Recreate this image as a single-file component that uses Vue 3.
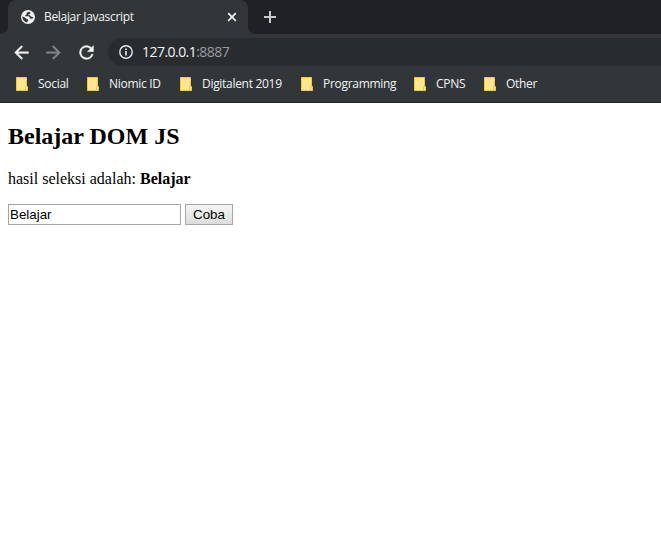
<script setup>
import { ref } from 'vue'

const bookmarks = [
  { name: 'Social', width: 31 },
  { name: 'Niomic ID', width: 53 },
  { name: 'Digitalent 2019', width: 81 },
  { name: 'Programming', width: 73 },
  { name: 'CPNS', width: 30 },
  { name: 'Other', width: 31 },
]
const word = ref('Belajar')
const result = ref('Belajar')
</script>

<template>
  <div class="browser">
    <div class="tabstrip">
      <div class="edge"></div>
      <div class="tab">
        <svg class="globe" viewBox="0 0 14 14">
          <circle cx="7" cy="7" r="7" fill="#f1f3f4" />
          <path d="M7.2 1.7 5.6 3v1.5L4.3 5.2v1h3.4l1.1 1.2v1h1.5l.8.8 1-2.2-2.3-.5-.8-1.2H7.4V4.2h1.3l1-1.5z" fill="#323639" />
          <path d="M1.5 6.2 4.7 8.1 5.6 9.2H7v1.5l-1 1.8C3.3 12 1.4 9.8 1.4 7z" fill="#323639" />
        </svg>
        <span class="tab-title">Belajar Javascript</span>
        <svg class="close" viewBox="0 0 10 10"><path d="m1.2 1.2 7.6 7.6M8.8 1.2 1.2 8.8" /></svg>
      </div>
      <div class="rest">
        <svg class="plus" viewBox="0 0 12 12"><path d="M6 0v12M0 6h12" /></svg>
      </div>
    </div>
    <div class="toolbar">
      <svg class="nav" viewBox="0 0 24 24"><path d="M20 11H7.83l5.59-5.59L12 4l-8 8 8 8 1.41-1.41L7.83 13H20z" /></svg>
      <svg class="nav dim" viewBox="0 0 24 24"><path d="m12 4-1.41 1.41L16.17 11H4v2h12.17l-5.58 5.59L12 20l8-8z" /></svg>
      <svg class="nav reload" viewBox="0 0 24 24"><path d="M17.65 6.35A8 8 0 1 0 19.73 14h-2.08A6 6 0 1 1 12 6c1.66 0 3.14.69 4.22 1.78L13 11h7V4z" /></svg>
      <div class="omnibox">
        <svg class="info" viewBox="0 0 14 14">
          <circle cx="7" cy="7" r="6.2" fill="none" stroke="#e8eaed" stroke-width="1.4" />
          <path d="M6.2 3.4h1.6V5H6.2zM6.2 6h1.6v4.6H6.2z" fill="#e8eaed" />
        </svg>
        <span class="url">127.0.0.1<span class="port">:8887</span></span>
      </div>
    </div>
    <div class="bookmarks">
      <div v-for="b in bookmarks" :key="b.name" class="bookmark">
        <svg class="folder" viewBox="0 0 12 14">
          <path d="M.5.5h10v9h1v4H.5z" fill="#ffe68f" stroke="#edc84c" />
          <path d="M9.5 13.5v-4h1" fill="none" stroke="#edc84c" />
        </svg>
        <span class="label" :style="{ width: b.width + 'px' }">{{ b.name }}</span>
      </div>
    </div>
    <main class="page">
      <h2>Belajar DOM JS</h2>
      <p>hasil seleksi adalah: <b>{{ result }}</b></p>
      <div class="form">
        <input v-model="word" type="text" />
        <button type="button" @click="result = word">Coba</button>
      </div>
    </main>
  </div>
</template>

<style>
body { background: #fff; }
</style>

<style scoped>
.browser { width: 661px; height: 539px; overflow: hidden; background: #fff; font-family: "Open Sans", "Noto Sans", sans-serif; }
svg { display: block; flex: none; }
.tabstrip { display: flex; height: 34px; background: linear-gradient(#202124 50%, #323639 50%); }
.edge { width: 8px; background: #202124; border-bottom-right-radius: 8px; }
.tab { width: 240px; box-sizing: border-box; padding: 0 11px 0 13px; display: flex; align-items: center; background: #323639; border-radius: 8px 8px 0 0; }
.globe { width: 14px; height: 14px; }
.tab-title { margin-left: 9px; width: 100px; font-size: 12px; letter-spacing: -0.32px; line-height: 16px; color: #f1f3f4; white-space: nowrap; }
.close { width: 10px; height: 10px; margin-left: auto; }
.close path { stroke: #f1f3f4; stroke-width: 1.7; }
.rest { flex: 1; display: flex; align-items: center; padding-left: 16px; background: #202124; border-bottom-left-radius: 8px; }
.plus { width: 12px; height: 12px; }
.plus path { stroke: #c8cacc; stroke-width: 2; }
.toolbar { display: flex; align-items: center; height: 36px; padding-left: 11px; gap: 11px; background: #323639; }
.nav { width: 21px; height: 21px; fill: #f1f3f4; stroke: #f1f3f4; stroke-width: 0.4; }
.dim { fill: #818486; stroke: #818486; }
.reload { margin-left: 0.5px; }
.omnibox { flex: 1; height: 28px; display: flex; align-items: center; padding-left: 11px; margin-left: 0.5px; background: #282c2f; border-radius: 14px 0 0 14px; }
.info { width: 14px; height: 14px; }
.url { margin-left: 9px; font-size: 14px; letter-spacing: -0.54px; line-height: 18px; color: #f1f3f4; }
.port { color: #969ba0; }
.bookmarks { box-sizing: border-box; height: 33px; padding: 0 0 4px 16px; display: flex; align-items: center; gap: 18px; background: #323639; border-bottom: 1px solid #252629; }
.bookmark { display: flex; align-items: center; gap: 10px; }
.folder { width: 12px; height: 14px; }
.label { font-size: 12px; letter-spacing: -0.3px; line-height: 16px; color: #f1f3f4; white-space: nowrap; }
.page { padding: 20px 8px 0; color: #000; font-family: "Liberation Serif", serif; font-size: 16px; }
h2 { margin: 0 0 20px; font-size: 24px; line-height: 27px; }
p { margin: 0 0 16px; line-height: 18px; }
.form { display: flex; gap: 4px; }
input, button { box-sizing: border-box; height: 21px; font: 13.333px "Liberation Sans", sans-serif; color: #000; border-radius: 0; }
input { width: 173px; padding: 1px; border: 1px solid #a5a5a5; background: #fff; }
button { width: 48px; padding: 0; border: 1px solid #a6a6a6; background: linear-gradient(#f5f5f5, #dddddd); }
</style>
